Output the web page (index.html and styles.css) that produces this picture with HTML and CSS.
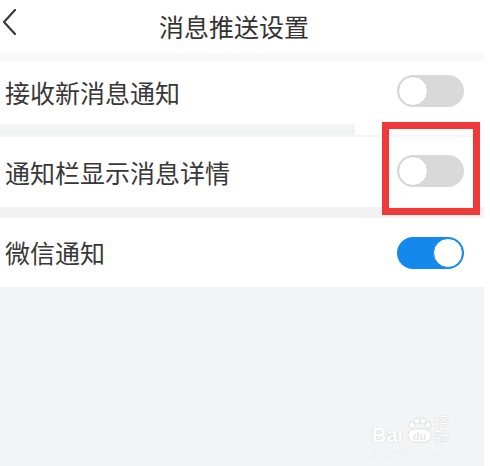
FILE: index.html
```html
<!DOCTYPE html>
<html lang="zh">
<head>
<meta charset="utf-8">
<link rel="stylesheet" href="styles.css">
</head>
<body>
<div class="app">
  <header class="topbar">
    <svg class="back" width="20" height="30" viewBox="0 0 20 30"><path d="M15 3 L4 15 L15 27" fill="none" stroke="#3a3a3a" stroke-width="2.2" stroke-linecap="round" stroke-linejoin="round"/></svg>
    <h1 class="title">消息推送设置</h1>
  </header>
  <div class="gap gap1"></div>
  <div class="row row1">
    <span class="label">接收新消息通知</span>
    <span class="switch"><span class="knob"></span></span>
  </div>
  <div class="gap gap2"></div>
  <div class="row row2">
    <span class="label">通知栏显示消息详情</span>
    <span class="switch"><span class="knob"></span></span>
  </div>
  <div class="gap gap3"></div>
  <div class="row row3">
    <span class="label">微信通知</span>
    <span class="switch on"><span class="knob"></span></span>
  </div>
  <div class="rest"></div>
  <div class="patch"></div>
  <div class="highlight"></div>
  <div class="watermark">
    <div class="wm-top">
      <span class="wm-bai">Bai</span>
      <span class="wm-paw">
        <svg width="30" height="30" viewBox="0 0 30 30">
          <g fill="#fff" stroke="#dcdcdc" stroke-width="0.8">
            <circle cx="8" cy="9" r="3"/>
            <circle cx="13" cy="5" r="3"/>
            <circle cx="19" cy="5" r="3"/>
            <circle cx="24" cy="9" r="3"/>
            <rect x="4" y="13" width="23" height="13" rx="6.5"/>
          </g>
          <text x="15.5" y="23.5" text-anchor="middle" font-family="Liberation Sans, sans-serif" font-weight="700" font-size="11" fill="#e8e8e8">du</text>
        </svg>
      </span>
      <span class="wm-jy">经验</span>
    </div>
    <div class="wm-url">jingyan.baidu.com</div>
  </div>
</div>
</body>
</html>
```

FILE: styles.css
```css
html, body {
  margin: 0;
  padding: 0;
  background: #ffffff;
}
body {
  width: 490px;
  height: 466px;
  overflow: hidden;
  font-family: "Noto Sans CJK SC", "Noto Sans", sans-serif;
  color: #363636;
}
.app {
  position: relative;
  width: 484px;
  height: 466px;
  display: flex;
  flex-direction: column;
  background: #f3f4f6;
}
.topbar {
  height: 53px;
  flex: none;
  background: #fff;
  display: flex;
  align-items: center;
  position: relative;
}
.back {
  position: absolute;
  left: 0;
  top: 7px;
}
.title {
  flex: 1;
  margin: 0;
  padding-right: 16px;
  text-align: center;
  font-size: 25px;
  font-weight: 400;
  line-height: 1;
  color: #333;
}
.gap { flex: none; }
.gap1 { height: 8px; background: #f9f9f9; }
.gap2 { height: 13px; background: linear-gradient(#f4f5f5, #f1f2f2 60%, #f7f7f7); }
.gap3 { height: 11px; background: #f2f2f2; }
.row {
  flex: none;
  background: #fff;
  display: flex;
  align-items: center;
  justify-content: space-between;
  padding: 0 20px 0 5px;
}
.row1 { height: 63px; }
.row2 { height: 70px; }
.row3 { height: 69px; }
.label {
  font-size: 25px;
  line-height: 1;
  color: #383838;
}
.switch {
  width: 67px;
  height: 32px;
  border-radius: 16px;
  background: #d9d9d9;
  display: flex;
  align-items: center;
  padding: 0 1px;
  box-sizing: border-box;
}
.switch .knob {
  width: 30px;
  height: 30px;
  border-radius: 50%;
  background: #fff;
  box-sizing: border-box;
  border: 1px solid #cfcfcf;
}
.row1 .switch { margin-top: -3px; }
.row2 .switch { margin-top: -2px; }
.switch.on {
  background: #1588ee;
  justify-content: flex-end;
}
.switch.on .knob {
  border-color: #1588ee;
}
.rest {
  flex: 1;
  background: #f3f4f6;
}
.patch {
  position: absolute;
  left: 355px;
  top: 124px;
  width: 129px;
  height: 11px;
  background: #fff;
}
.highlight {
  position: absolute;
  left: 382px;
  top: 122px;
  width: 98px;
  height: 93px;
  box-sizing: border-box;
  border: 7px solid #f03a3a;
}
.watermark {
  position: absolute;
  left: 372px;
  top: 410px;
  width: 92px;
  color: #fff;
}
.wm-top {
  display: flex;
  align-items: flex-end;
  height: 36px;
}
.wm-bai {
  font-family: "Liberation Sans", sans-serif;
  font-weight: 700;
  font-size: 20px;
  line-height: 1;
  color: #fff;
  text-shadow: 0 0 1px #cfcfcf, 0 0 1px #cfcfcf;
  margin-bottom: 1px;
}
.wm-paw {
  display: block;
  height: 30px;
  margin-left: 1px;
}
.wm-jy {
  font-size: 15px;
  line-height: 1;
  color: #fff;
  text-shadow: 0 0 1px #cfcfcf, 0 0 1px #cfcfcf;
  margin-bottom: 2px;
}
.wm-url {
  font-family: "Liberation Serif", serif;
  font-size: 10px;
  line-height: 1;
  margin-top: 2px;
  color: #fff;
  text-shadow: 0 0 1px #d0d0d0;
}
```
